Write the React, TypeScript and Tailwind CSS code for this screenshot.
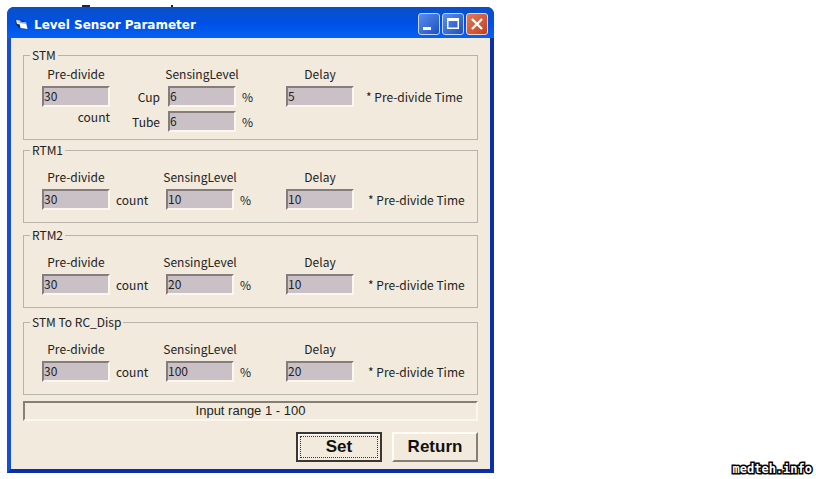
import { useState } from 'react';
import type { ReactNode } from 'react';

interface FieldProps {
  id: string;
  label: string;
  value: string;
  onChange: (value: string) => void;
}

function Field({ id, label, value, onChange }: FieldProps) {
  return (
    <input
      id={id}
      type="text"
      inputMode="numeric"
      aria-label={label}
      value={value}
      onChange={(e) => onChange(e.target.value)}
      className="h-[21px] w-full border-2 border-t-[#857d7d] border-r-[#fbf6ee] border-b-[#fbf6ee] border-l-[#857d7d] bg-[#c9c1c5] pb-0.5 text-[12px] leading-4 text-[#222] outline-none"
    />
  );
}

interface GroupProps {
  title: string;
  className: string;
  children: ReactNode;
}

function Group({ title, className, children }: GroupProps) {
  return (
    <fieldset className={`min-w-0 border border-[#b9b4a9] pl-[18px] ${className}`}>
      <legend className="-ml-3 px-0.5 leading-4">{title}</legend>
      {children}
    </fieldset>
  );
}

function Headings({ id }: { id: string }) {
  return (
    <>
      <label htmlFor={`${id}-divide`} className="justify-self-center">Pre-divide</label>
      <span />
      <label htmlFor={`${id}-level`} className="justify-self-center">SensingLevel</label>
      <span />
      <label htmlFor={`${id}-delay`} className="justify-self-center">Delay</label>
      <span />
    </>
  );
}

interface SensorGroupProps {
  id: string;
  title: string;
  className: string;
  initial: string[];
}

function SensorGroup({ id, title, className, initial }: SensorGroupProps) {
  const [divide, setDivide] = useState(initial[0]);
  const [level, setLevel] = useState(initial[1]);
  const [delay, setDelay] = useState(initial[2]);

  return (
    <Group title={title} className={`pt-[11px] pb-3 ${className}`}>
      <div className="grid grid-cols-[68px_56px_68px_52px_68px_1fr] items-center gap-y-1">
        <Headings id={id} />
        <Field id={`${id}-divide`} label="Pre-divide" value={divide} onChange={setDivide} />
        <span className="pl-1.5">count</span>
        <Field id={`${id}-level`} label="SensingLevel" value={level} onChange={setLevel} />
        <span className="pl-1.5">%</span>
        <Field id={`${id}-delay`} label="Delay" value={delay} onChange={setDelay} />
        <span className="pl-3.5">* Pre-divide Time</span>
      </div>
    </Group>
  );
}

function StmGroup() {
  const [divide, setDivide] = useState('30');
  const [cup, setCup] = useState('6');
  const [tube, setTube] = useState('6');
  const [delay, setDelay] = useState('5');

  return (
    <Group title="STM" className="pt-[3px] pb-[7px]">
      <div className="grid grid-cols-[68px_58px_68px_50px_68px_1fr] items-center gap-y-1">
        <Headings id="stm" />
        <Field id="stm-divide" label="Pre-divide" value={divide} onChange={setDivide} />
        <label htmlFor="stm-level" className="pr-2 text-right">Cup</label>
        <Field id="stm-level" label="Cup" value={cup} onChange={setCup} />
        <span className="pl-1.5">%</span>
        <Field id="stm-delay" label="Delay" value={delay} onChange={setDelay} />
        <span className="pl-3">* Pre-divide Time</span>

        <span className="self-start text-right leading-3">count</span>
        <label htmlFor="stm-tube" className="pr-2 text-right">Tube</label>
        <Field id="stm-tube" label="Tube" value={tube} onChange={setTube} />
        <span className="pl-1.5">%</span>
      </div>
    </Group>
  );
}

function TitleBar() {
  return (
    <header className="flex h-[31px] items-center rounded-t-[7px] bg-linear-to-b from-[#0b4fc4] via-[#0050e4] to-[#0660f4] pr-1.5 pl-2">
      <svg viewBox="0 0 14 14" className="mt-0.5 h-3.5 w-3.5" aria-hidden="true">
        <path d="M0 3l9 1 3 8-8-1-3-4z" fill="#0a2a6c" />
        <path d="M1 3l4 .5 1.500 4L2 7z" fill="#dfe9f5" />
        <path d="M4 4.500l7 1 1.500 6.500-7-1z" fill="#fff" />
        <path d="M4 4.500l7 1 .3 1.500-7-1z" fill="#8aa6cf" />
      </svg>
      <h1 className="mt-1 ml-[5px] flex-1 font-['DejaVu_Sans','Liberation_Sans',sans-serif] text-[12px] leading-4 font-bold text-white">
        Level Sensor Parameter
      </h1>
      <div className="mt-0.5 flex gap-0.5">
        <button type="button" aria-label="Minimize" className="h-[22px] w-[22px] rounded-[3px] border border-[#c3d5f5] bg-linear-to-br from-[#5b8ded] to-[#1c50c4]">
          <svg viewBox="0 0 20 20" className="h-5 w-5">
            <path d="M4 13h8v3H4z" fill="#fff" />
          </svg>
        </button>
        <button type="button" aria-label="Maximize" className="h-[22px] w-[22px] rounded-[3px] border border-[#c3d5f5] bg-linear-to-br from-[#5b8ded] to-[#1c50c4]">
          <svg viewBox="0 0 20 20" className="h-5 w-5">
            <path d="M4 4h12v11H4zM5.500 7v6.500h9V7z" fill="#fff" fillRule="evenodd" />
          </svg>
        </button>
        <button type="button" aria-label="Close" className="h-[22px] w-[22px] rounded-[3px] border border-[#f3d5cc] bg-linear-to-br from-[#e07a5c] to-[#c23f1c]">
          <svg viewBox="0 0 20 20" className="h-5 w-5">
            <path d="M5 5l10 10M15 5L5 15" stroke="#fff" strokeWidth="2.4" />
          </svg>
        </button>
      </div>
    </header>
  );
}

export default function App() {
  return (
    <div className="flex min-h-screen bg-white pr-1 pb-0.5 pl-[7px] font-['Noto_Sans_CJK_JP',sans-serif] text-[12px] leading-4 text-[#222]">
      <div className="w-full max-w-[487px]">
        {/* remains of the text behind the window */}
        <svg viewBox="0 0 487 7" className="h-[7px] w-full" aria-hidden="true">
          <path d="M75 6h8M164 6h2" stroke="#1c2450" strokeWidth="2" />
        </svg>
        <main className="rounded-t-[7px] bg-[#0a3cc0]">
          <TitleBar />
          <div className="border-r-4 border-b-4 border-l-4 border-t-0 border-r-[#0a2fa8] border-b-[#0a2fa8] border-l-[#1450d0] bg-[#f1eadd] px-3 pt-[9px] pb-[7px]">
            <StmGroup />
            <SensorGroup id="rtm1" title="RTM1" className="mt-0.5" initial={['30', '10', '10']} />
            <SensorGroup id="rtm2" title="RTM2" className="mt-1" initial={['30', '20', '10']} />
            <SensorGroup id="disp" title="STM To RC_Disp" className="mt-1.5" initial={['30', '100', '20']} />

            <p className="mt-1.5 border-2 border-t-[#857f76] border-r-[#fbf6ee] border-b-[#fbf6ee] border-l-[#857f76] text-center font-['Liberation_Sans',sans-serif] text-[13px] leading-4">
              Input range 1 - 100
            </p>

            <div className="mt-[11px] flex justify-end gap-2.5 font-['Liberation_Sans',sans-serif] text-[17px] leading-5 font-bold text-[#111]">
              <button type="button" className="h-[30px] w-[86px] border-2 border-[#3a3732] p-0.5 shadow-[inset_1px_1px_0_#fff]">
                <span className="flex h-full items-center justify-center border border-dotted border-[#3a3732]">Set</span>
              </button>
              <button type="button" className="h-[30px] w-[86px] border-2 border-t-[#fffdf6] border-r-[#857f76] border-b-[#857f76] border-l-[#fffdf6]">
                Return
              </button>
            </div>
          </div>
        </main>
      </div>
      <a
        href="#"
        className="ml-auto self-end font-['DejaVu_Sans_Mono',monospace] text-[12px] leading-4 font-bold text-white [paint-order:stroke_fill] [-webkit-text-stroke:3px_#000]"
      >
        medteh.info
      </a>
    </div>
  );
}
